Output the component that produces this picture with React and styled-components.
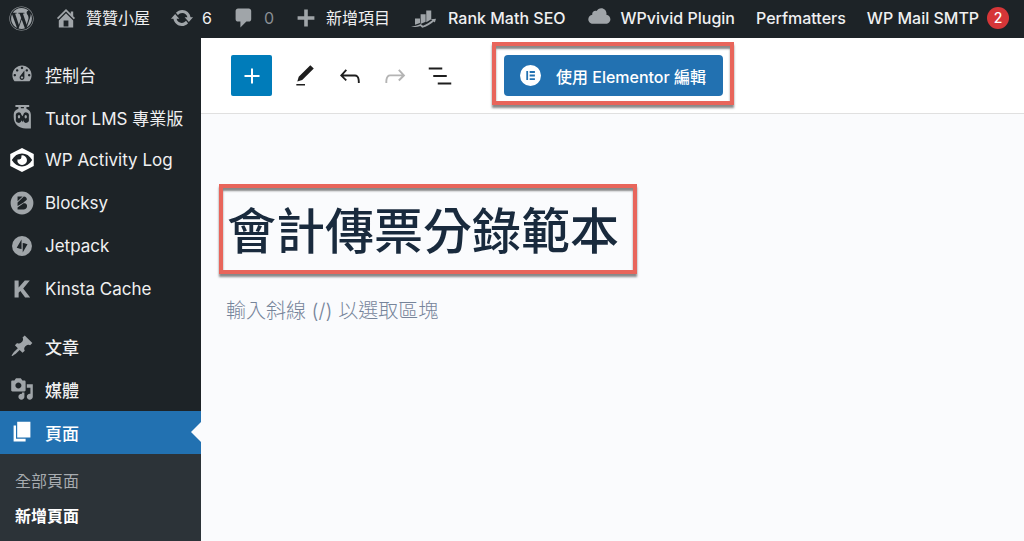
import styled, { createGlobalStyle, css } from "styled-components";
import { FaWordpress } from "react-icons/fa";

const dashicons = {
  home: "M16 8.5l1.53 1.53-1.06 1.06L10 4.6l-6.47 6.49-1.06-1.06L10 2.5l4 4v-2h2v4zm-6-2.46l6 5.99V18H4v-5.97zM12 17v-5H8v5h4z",
  update:
    "M10.2 3.28c3.53 0 6.43 2.61 6.92 6h2.08l-3.5 4-3.5-4h2.32c-.45-1.97-2.21-3.45-4.32-3.45-1.45 0-2.73.71-3.54 1.78L4.95 5.66C6.23 4.2 8.11 3.28 10.2 3.28zm-.4 13.44c-3.52 0-6.43-2.61-6.92-6H.8l3.5-4c1.17 1.33 2.33 2.67 3.5 4H5.48c.45 1.97 2.21 3.45 4.32 3.45 1.45 0 2.73-.71 3.54-1.78l1.71 1.95c-1.28 1.46-3.15 2.38-5.25 2.38z",
  comments:
    "M5 2h9c1.1 0 2 .9 2 2v7c0 1.1-.9 2-2 2h-2l-5 5v-5H5c-1.1 0-2-.9-2-2V4c0-1.1.9-2 2-2z",
  plus: "M17 8.500v3h-5.500v5.500h-3v-5.500H3v-3h5.500V3h3v5.500h5.500z",
  cloud:
    "M14.9 7.500c1.8.2 3.1 1.7 3.1 3.5 0 1.9-1.6 3.5-3.500 3.5h-10C2.6 14.500 1 12.900 1 11 1 9.200 2.3 7.800 4.1 7.500 4 7.400 4 7.200 4 7 4 5.600 5.1 4.500 6.500 4.500c.3 0 .7.1.9.2C8.1 3.400 9.4 2.500 11 2.500c2.2 0 4 1.8 4 4 0 .4-.1.7-.1 1z",
  rankMath:
    "M3.200 10h4v3.500L3.200 15zM7.700 6.500h4v6l-4 1.800zM12.200 3.500h4V10.500l-4 2.500zM0 16.500c3-.2 5-.8 7.800-2.100l1.800 1.300c3-1.200 5.200-2.600 7.400-4.300l-.9-.8 3.900-.5-.9 3-.9-.7c-2.700 2.300-5.700 4-9.200 5l-1.600-1.400C5 17 3 17 0 16.500z",
  dashboard:
    "M3.76 16h12.48c1.1-1.37 1.76-3.11 1.76-5 0-4.42-3.58-8-8-8s-8 3.58-8 8c0 1.89.66 3.63 1.76 5zM10 4c.55 0 1 .45 1 1s-.45 1-1 1-1-.45-1-1 .45-1 1-1zM6 6c.55 0 1 .45 1 1s-.45 1-1 1-1-.45-1-1 .45-1 1-1zm8 0c.55 0 1 .45 1 1s-.45 1-1 1-1-.45-1-1 .45-1 1-1zm-5.37 5.55L12 7v6c0 1.1-.9 2-2 2s-2-.9-2-2c0-.57.24-1.08.63-1.45zM4 10c.55 0 1 .45 1 1s-.45 1-1 1-1-.45-1-1 .45-1 1-1zm12 0c.55 0 1 .45 1 1s-.45 1-1 1-1-.45-1-1 .45-1 1-1zm-5 3c0-.55-.45-1-1-1s-1 .45-1 1 .45 1 1 1 1-.45 1-1z",
  tutor:
    "M4.500 0h11.500v1.600h-2.300v1.600c2.300.9 3.700 2.600 3.700 5V19.500h-4.200C7 19.500 3.100 15.500 3.100 10V8c0-2.400 1.400-4 3.900-4.800V1.600H4.500zM9 1.600v1.200h2.600V1.600zM9.600 8.300a2.400 2.800 0 0 0-4.700 1.200v2a2.400 2.800 0 0 0 4.700 1.200l.7 1.600.7-1.600a2.400 2.800 0 0 0 4.700-1.200v-2a2.400 2.800 0 0 0-4.700-1.200l-.7 1zM7.500 8.300a1 1.500 0 1 1 0 3 1 1.500 0 1 1 0-3zM13.100 8.300a1 1.500 0 1 1 0 3 1 1.500 0 1 1 0-3z",
  activity:
    "M10 0l9.800 5v10L10 20 .2 15V5zM1.500 10c2.200 3.600 5 5.400 8.500 5.400s6.300-1.800 8.500-5.400C16.300 6.400 13.500 4.600 10 4.600S3.700 6.400 1.500 10zM9.500 6.200a4 4 0 1 1-3.300 3.300h1.500a1.800 1.800 0 0 0 1.800-1.800z",
  blocksy:
    "M10 .5a9.500 9.500 0 1 1 0 19 9.500 9.500 0 0 1 0-19zM6.300 4.500h4.200L6.300 8.500zM11.500 4.500c1.700 0 2.700 1.200 2.500 2.700L11 9.800l-4.700 2.700V9.600zM6.300 15.500v-1.800l5-3.400h1.300c1 .4 1.600 1.200 1.600 2.300 0 1.700-1.200 2.900-2.900 2.900z",
  jetpack:
    "M10 1.700a8.300 8.300 0 1 1 0 16.600 8.300 8.300 0 0 1 0-16.600zM9.600 4.500L5.600 11.500l2.600.7 1.400.3zM10.600 7.500v8l4-7-2.600-.7z",
  kinsta: "M3.800 3h3.400v5.700L12.300 3h4.200L11 9.500 16.800 17h-4.200L8.600 11.700l-1.400 1.500V17H3.800z",
  post: "M10.440 3.020l1.820-1.820 6.360 6.350-1.830 1.820c-1.050-.68-2.480-.57-3.410.36l-.75.75c-.92.93-1.040 2.350-.35 3.410l-1.830 1.820-2.410-2.410-2.800 2.790c-.42.42-3.380 2.710-3.800 2.290s1.860-3.390 2.280-3.810l2.790-2.790L4.100 9.360l1.830-1.820c1.050.69 2.480.57 3.400-.36l.75-.75c.93-.92 1.050-2.350.36-3.410z",
  media:
    "M13 11V4c0-.55-.45-1-1-1h-1.67L9 1H5L3.67 3H2c-.55 0-1 .45-1 1v7c0 .55.45 1 1 1h10c.55 0 1-.45 1-1zM7 4.500c1.380 0 2.500 1.120 2.500 2.500S8.380 9.500 7 9.500 4.500 8.380 4.500 7 5.620 4.500 7 4.500zM14 6h5v10.500c0 1.380-1.120 2.500-2.500 2.500S14 17.880 14 16.500s1.120-2.500 2.500-2.500c.17 0 .34.02.5.05V9h-3V6zm-4 8.050V13h2v3.500c0 1.380-1.120 2.500-2.500 2.500S7 17.880 7 16.500 8.120 14 9.500 14c.17 0 .34.02.5.05z",
  page: "M6 14.500V1.500h11v13H6zm-1 1.200h8v2.300H3V4.500h2v11.200z",
  elementor:
    "M10 0a10 10 0 1 1 0 20 10 10 0 0 1 0-20zM6 5.800v8.400h1.700V5.800zM9.200 5.800v1.700h5V5.800zM9.200 9.150v1.700h5v-1.700zM9.200 12.500v1.700h5v-1.700z",
};

const editorIcons = {
  plus: "M18 11.200h-5.200V6h-1.600v5.200H6v1.600h5.200V18h1.600v-5.200H18z",
  edit: "M20.1 5.1L16.9 2 6.200 12.700l-1.300 4.400 4.500-1.300L20.1 5.1zM4 20.800h8v-1.500H4v1.500z",
  undo: "M18.3 11.700c-.6-.6-1.400-.9-2.300-.9H6.700l2.900-3.300-1.100-1-4.500 5L8.500 16l1-1-2.700-2.700H16c.5 0 .9.2 1.300.5 1 1 1 3.400 1 4.500v.3h1.500v-.2c0-1.500 0-4.300-1.500-5.700z",
  redo: "M15.6 6.500l-1.100 1 2.900 3.300H8c-.9 0-1.700.3-2.300.9-1.400 1.500-1.400 4.200-1.400 5.600v.2h1.500v-.3c0-1.100 0-3.500 1-4.500.3-.3.7-.5 1.300-.5h9.200L14.500 15l1.100 1.100 4.600-4.600-4.600-5z",
  list: "M13.8 5.200H3v1.500h10.800V5.200zm-3.600 12v1.500H21v-1.500H10.200zm7.200-6H6.600v1.500h10.800v-1.500z",
};

const mainMenu = [
  { label: "控制台", icon: "dashboard" },
  { label: "Tutor LMS 專業版", icon: "tutor" },
  { label: "WP Activity Log", icon: "activity", bright: true },
  { label: "Blocksy", icon: "blocksy" },
  { label: "Jetpack", icon: "jetpack" },
  { label: "Kinsta Cache", icon: "kinsta" },
];

const contentMenu = [
  { label: "文章", icon: "post" },
  { label: "媒體", icon: "media" },
  { label: "頁面", icon: "page", current: true },
];

function Dashicon({ name, size = 24 }) {
  return (
    <svg width={size} height={size} viewBox="0 0 20 20" aria-hidden="true">
      <path d={dashicons[name]} fill="currentColor" fillRule="evenodd" />
    </svg>
  );
}

function EditorIcon({ name, size = 30 }) {
  return (
    <svg width={size} height={size} viewBox="0 0 24 24" aria-hidden="true">
      <path d={editorIcons[name]} fill="currentColor" />
    </svg>
  );
}

function MenuList({ items, medium }) {
  return (
    <List>
      {items.map((item) => (
        <li key={item.label}>
          <MenuLink
            href="#"
            $current={item.current}
            $bright={item.bright}
            $medium={medium}
            aria-current={item.current ? "page" : undefined}
          >
            <Dashicon name={item.icon} />
            {item.label}
          </MenuLink>
        </li>
      ))}
    </List>
  );
}

export default function App() {
  return (
    <>
      <GlobalStyle />
      <Page>
        <AdminBar>
          <BarGroup>
            <BarLink href="#" aria-label="WordPress">
              <FaWordpress size={25} />
            </BarLink>
            <BarLink href="#">
              <Dashicon name="home" />
              贊贊小屋
            </BarLink>
            <BarLink href="#">
              <Dashicon name="update" />6
            </BarLink>
            <BarLink href="#" $muted>
              <Dashicon name="comments" />
              <span>0</span>
            </BarLink>
            <BarLink href="#">
              <Dashicon name="plus" />
              新增項目
            </BarLink>
          </BarGroup>
          <BarGroup $plugins>
            <BarLink href="#" $wide>
              <Dashicon name="rankMath" size={25} />
              Rank Math SEO
            </BarLink>
            <BarLink href="#">
              <Dashicon name="cloud" size={26} />
              WPvivid Plugin
            </BarLink>
            <BarLink href="#">Perfmatters</BarLink>
            <BarLink href="#">
              WP Mail SMTP
              <Badge>2</Badge>
            </BarLink>
          </BarGroup>
        </AdminBar>
        <Body>
          <Sidebar>
            <MenuList items={mainMenu} />
            <MenuList items={contentMenu} medium />
            <SubMenu>
              <li>
                <SubLink href="#">全部頁面</SubLink>
              </li>
              <li>
                <SubLink href="#" $current>
                  新增頁面
                </SubLink>
              </li>
            </SubMenu>
          </Sidebar>
          <Editor>
            <Toolbar>
              <ToolButton $primary aria-label="新增區塊">
                <EditorIcon name="plus" />
              </ToolButton>
              <ToolButton aria-label="工具">
                <EditorIcon name="edit" size={26} />
              </ToolButton>
              <ToolButton aria-label="復原">
                <EditorIcon name="undo" />
              </ToolButton>
              <ToolButton aria-label="重做" disabled>
                <EditorIcon name="redo" />
              </ToolButton>
              <ToolButton aria-label="清單檢視">
                <EditorIcon name="list" />
              </ToolButton>
              <ButtonHighlight>
                <ElementorButton>
                  <Dashicon name="elementor" size={21} />
                  使用 Elementor 編輯
                </ElementorButton>
              </ButtonHighlight>
            </Toolbar>
            <Canvas>
              <TitleHighlight>
                <TitleInput aria-label="標題" defaultValue="會計傳票分錄範本" />
              </TitleHighlight>
              <BlockInput
                aria-label="區塊"
                placeholder="輸入斜線 (/) 以選取區塊"
              />
            </Canvas>
          </Editor>
        </Body>
      </Page>
    </>
  );
}

const GlobalStyle = createGlobalStyle`
  * {
    box-sizing: border-box;
  }
  body {
    margin: 0;
    font-family: Inter, "Noto Sans CJK TC", sans-serif;
    font-size: 16px;
  }
  button, input {
    font-family: inherit;
  }
  a {
    text-decoration: none;
  }
  svg {
    display: block;
    flex-shrink: 0;
  }
`;

const Page = styled.div`
  min-height: 100vh;
  display: flex;
  flex-direction: column;
  overflow: hidden;
`;

const AdminBar = styled.nav`
  display: flex;
  gap: 21px;
  height: 38px;
  padding-left: 9px;
  padding-bottom: 2px;
  background: #1d2327;
`;

const BarGroup = styled.div`
  display: flex;
  align-items: center;
  gap: ${(props) => (props.$plugins ? "21px" : "20px")};
  font-weight: ${(props) => (props.$plugins ? 500 : 400)};
`;

const BarLink = styled.a`
  display: flex;
  align-items: center;
  gap: ${(props) => (props.$wide ? "12px" : "8px")};
  color: #f0f0f1;
  line-height: 36px;
  white-space: nowrap;

  svg {
    color: #a0a5a9;
  }
  span {
    color: ${(props) => (props.$muted ? "#8a8f94" : "#ffffff")};
  }
`;

const Badge = styled.span`
  width: 22px;
  height: 22px;
  border-radius: 50%;
  background: #d63638;
  font-size: 14px;
  line-height: 22px;
  text-align: center;
`;

const Body = styled.div`
  flex: 1;
  display: flex;
`;

const Sidebar = styled.nav`
  width: 201px;
  flex-shrink: 0;
  display: flex;
  flex-direction: column;
  gap: 14px;
  padding-top: 15px;
  background: #1d2327;
`;

const List = styled.ul`
  margin: 0;
  padding: 0;
  list-style: none;
`;

const MenuLink = styled.a`
  position: relative;
  display: flex;
  align-items: center;
  gap: 11px;
  height: 43px;
  padding: 0 0 1px 10px;
  color: #f0f0f1;
  font-size: 17px;
  font-weight: ${(props) => (props.$medium ? 500 : 400)};
  white-space: nowrap;

  svg {
    color: ${(props) => (props.$bright ? "#ffffff" : "#a0a5a9")};
  }

  ${(props) =>
    props.$current &&
    css`
      background: #2271b1;
      color: #ffffff;

      svg {
        color: #ffffff;
      }
      &::after {
        content: "";
        position: absolute;
        right: 0;
        top: 11px;
        border: 10px solid transparent;
        border-left-width: 0;
        border-right-color: #fafbfd;
      }
    `}
`;

const SubMenu = styled(List)`
  flex: 1;
  margin-top: -14px;
  padding: 10px 0 7px;
  background: #2c3338;
`;

const SubLink = styled.a`
  display: block;
  padding-left: 15px;
  line-height: 35px;
  color: ${(props) => (props.$current ? "#ffffff" : "#a7abaf")};
  font-weight: ${(props) => (props.$current ? 700 : 400)};
`;

const Editor = styled.main`
  flex: 1;
  min-width: 0;
  display: flex;
  flex-direction: column;
`;

const Toolbar = styled.div`
  display: flex;
  align-items: center;
  gap: 4px;
  height: 76px;
  padding-left: 30px;
  border-bottom: 1px solid #e0e0e0;
  background: #ffffff;
`;

const ToolButton = styled.button`
  display: flex;
  align-items: center;
  justify-content: center;
  width: 41px;
  height: 41px;
  padding: 0;
  border: 0;
  border-radius: 2px;
  background: none;
  color: #1e1e1e;

  &:disabled {
    color: #b4b4b4;
  }
  ${(props) =>
    props.$primary &&
    css`
      margin-right: 8px;
      background: #007cba;
      color: #ffffff;
    `}
`;

const Highlight = styled.div`
  border: 4px solid #e8655b;
  box-shadow:
    0 3px 2px rgba(60, 60, 60, 0.6),
    inset 0 3px 2px rgba(60, 60, 60, 0.6);
`;

const ButtonHighlight = styled(Highlight)`
  margin: 0 0 4px 28px;
  padding: 9px 7px 5px 8px;
`;

const ElementorButton = styled.button`
  display: flex;
  align-items: center;
  gap: 15px;
  height: 41px;
  padding: 0 17px 0 16px;
  border: 0;
  border-radius: 4px;
  background: #2271b1;
  color: #ffffff;
  font-size: 16px;
  font-weight: 500;
  white-space: nowrap;
`;

const Canvas = styled.div`
  flex: 1;
  padding: 70px 18px 20px;
  background: #fafbfd;
`;

const TitleHighlight = styled(Highlight)`
  max-width: 418px;
  padding: 0 4px;
`;

const TitleInput = styled.input`
  display: block;
  width: 100%;
  height: 82px;
  padding: 0 0 4px;
  border: 0;
  background: none;
  color: #192a3d;
  font-size: 49px;
  font-weight: 500;
`;

const BlockInput = styled.input`
  display: block;
  width: 100%;
  height: 32px;
  margin-top: 21px;
  padding: 0 7px;
  border: 0;
  background: none;
  font-size: 20px;
  font-weight: 300;

  &::placeholder {
    color: #76849a;
  }
`;
